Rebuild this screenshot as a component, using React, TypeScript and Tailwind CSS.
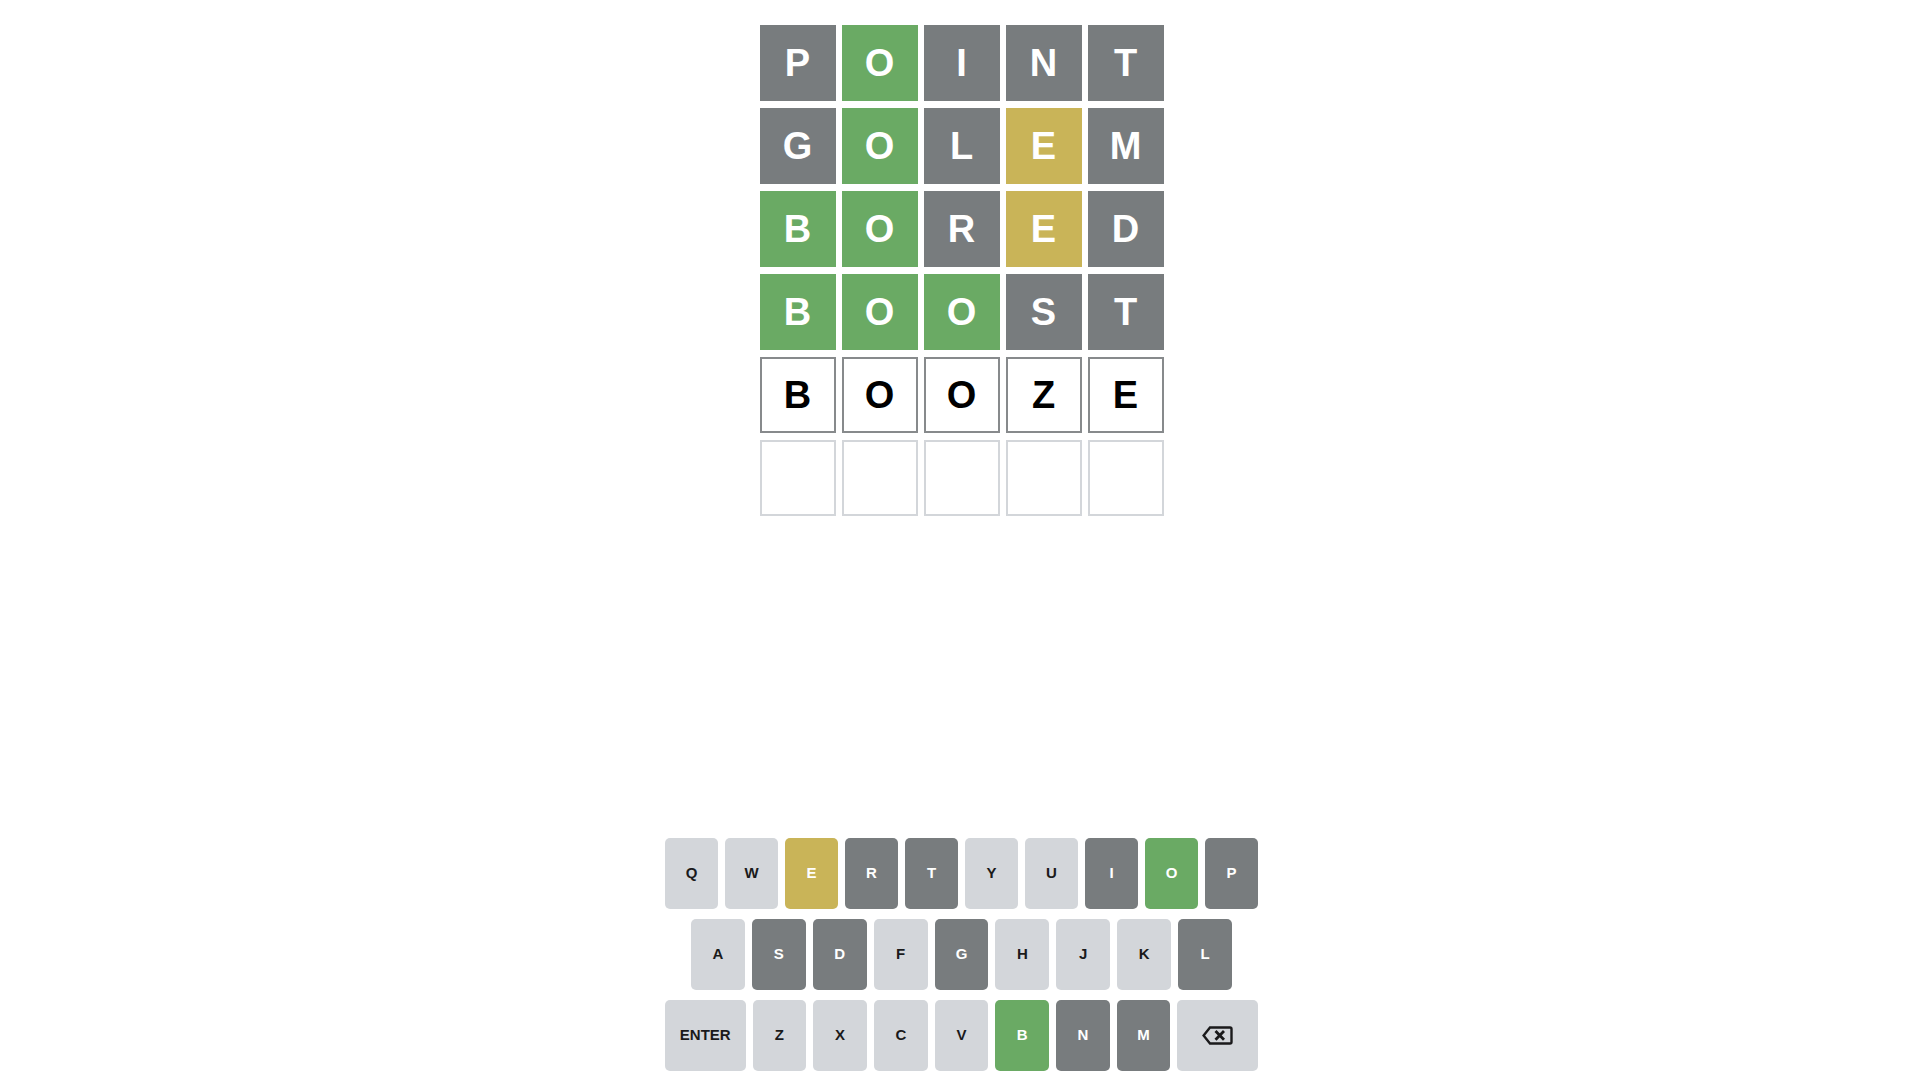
import React from 'react';

type State = 'correct' | 'present' | 'absent' | 'tbd' | 'empty';

const rows: { word: string; states: State[] }[] = [
  { word: 'POINT', states: ['absent', 'correct', 'absent', 'absent', 'absent'] },
  { word: 'GOLEM', states: ['absent', 'correct', 'absent', 'present', 'absent'] },
  { word: 'BORED', states: ['correct', 'correct', 'absent', 'present', 'absent'] },
  { word: 'BOOST', states: ['correct', 'correct', 'correct', 'absent', 'absent'] },
  { word: 'BOOZE', states: ['tbd', 'tbd', 'tbd', 'tbd', 'tbd'] },
  { word: '     ', states: ['empty', 'empty', 'empty', 'empty', 'empty'] },
];

const tileClass: Record<State, string> = {
  correct: 'bg-[#6aaa64] text-white',
  present: 'bg-[#c9b458] text-white',
  absent: 'bg-[#787c7e] text-white',
  tbd: 'bg-white text-black border-2 border-[#878a8c]',
  empty: 'bg-white border-2 border-[#d3d6da]',
};

type KeyState = 'correct' | 'present' | 'absent' | 'unused';

const keyState: Record<string, KeyState> = {
  E: 'present', R: 'absent', T: 'absent', I: 'absent', O: 'correct', P: 'absent',
  S: 'absent', D: 'absent', G: 'absent', L: 'absent',
  B: 'correct', N: 'absent', M: 'absent',
};

const keyClass: Record<KeyState, string> = {
  correct: 'bg-[#6aaa64] text-white',
  present: 'bg-[#c9b458] text-white',
  absent: 'bg-[#787c7e] text-white',
  unused: 'bg-[#d3d6da] text-[#1a1a1b]',
};

const Key: React.FC<{ label: string; wide?: boolean; children?: React.ReactNode }> = ({ label, wide, children }) => {
  const st = keyState[label] ?? 'unused';
  return (
    <button
      className={`${wide ? 'flex-[1.5]' : 'flex-1'} h-[71px] rounded-[5px] flex items-center justify-center text-[15px] font-bold uppercase ${keyClass[st]}`}
    >
      {children ?? label}
    </button>
  );
};

const Backspace = () => (
  <svg width="31" height="19" viewBox="0 0 31 19" fill="none" stroke="#1a1a1b">
    <path d="M8 1.5H28Q29.5 1.5 29.5 3V16Q29.5 17.5 28 17.5H8L1.6 9.5Z" strokeWidth="2.4" strokeLinejoin="miter" />
    <path d="M13.5 5L22 13.8M22 5L13.5 13.8" strokeWidth="2.8" />
  </svg>
);

export default function App() {
  return (
    <div className="w-full h-screen bg-white flex flex-col items-center pl-[3px] font-['Liberation_Sans',Arial,sans-serif]">
      <div className="pt-[25px] flex flex-col gap-[7px]">
        {rows.map((r, i) => (
          <div key={i} className="grid grid-cols-5 gap-[6px]">
            {r.states.map((s, j) => (
              <div
                key={j}
                className={`w-[76px] h-[76px] flex items-center justify-center text-[38px] font-bold leading-none ${tileClass[s]}`}
              >
                {r.word[j].trim()}
              </div>
            ))}
          </div>
        ))}
      </div>

      <div className="mt-auto mb-[9px] w-[593px] flex flex-col gap-[10px]">
        <div className="flex gap-[7px]">
          {'QWERTYUIOP'.split('').map(k => <Key key={k} label={k} />)}
        </div>
        <div className="flex gap-[7px] px-[26px]">
          {'ASDFGHJKL'.split('').map(k => <Key key={k} label={k} />)}
        </div>
        <div className="flex gap-[7px]">
          <Key label="Enter" wide />
          {'ZXCVBNM'.split('').map(k => <Key key={k} label={k} />)}
          <Key label="Back" wide><Backspace /></Key>
        </div>
      </div>
    </div>
  );
}
